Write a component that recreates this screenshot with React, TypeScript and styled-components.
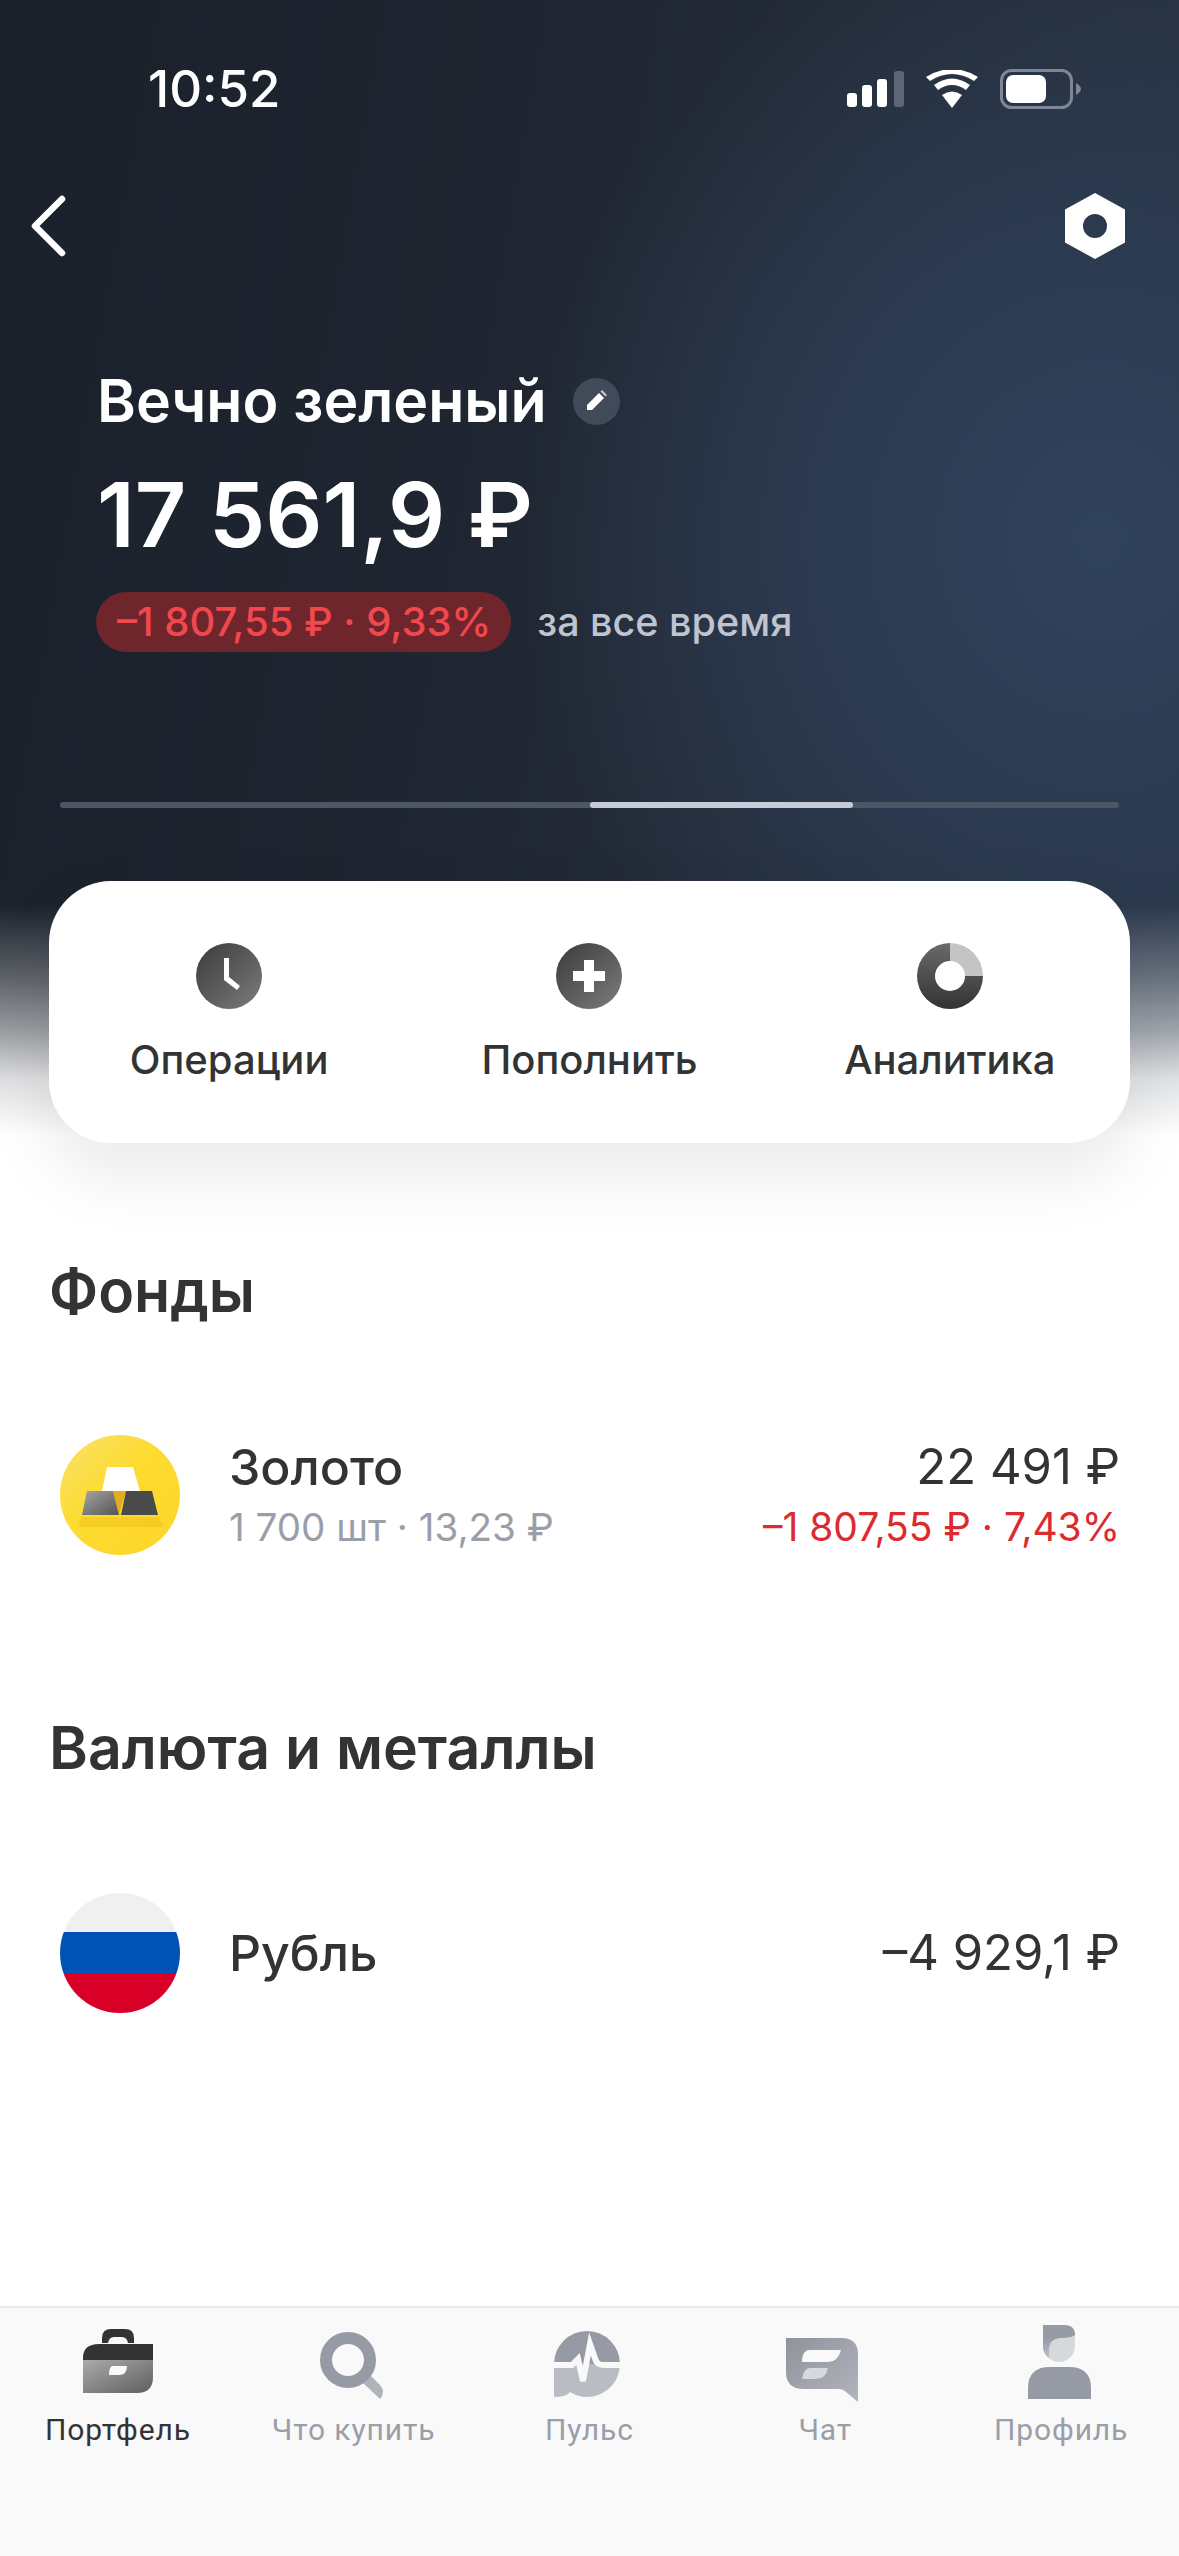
import React from 'react';
import styled, {createGlobalStyle} from "styled-components";

const GlobalStyle = createGlobalStyle`
  html, body {
    margin: 0;
    padding: 0;
    background: #fff;
  }
  * {
    box-sizing: border-box;
  }
`

const Page = styled.div`
  width: 1179px;
  height: 2556px;
  display: flex;
  flex-direction: column;
  overflow: hidden;
  background: #fff;
  font-family: Inter, "Noto Sans", sans-serif;
  color: #333333;
`
const Hero = styled.header`
  height: 1180px;
  padding-top: 64px;
  flex-shrink: 0;
  background:
    linear-gradient(to bottom, rgba(255,255,255,0) 905px, rgba(255,255,255,.3) 980px, rgba(255,255,255,.55) 1030px, rgba(255,255,255,.86) 1080px, #fff 1135px),
    radial-gradient(ellipse 580px 640px at 1100px 540px, #31425c 0%, #2c3a50 50%, rgba(38,48,64,0) 100%),
    linear-gradient(100deg, #1b212b 0%, #1e2530 35%, #2a3442 100%);
`
const StatusBar = styled.div`
  height: 50px;
  display: flex;
  align-items: center;
  justify-content: space-between;
  padding: 0 98px 0 148px;
`
const Time = styled.span`
  font-size: 51px;
  font-weight: 500;
  line-height: 50px;
  color: #fff;
`
const StatusIcons = styled.div`
  display: flex;
  align-items: center;
  gap: 22px;
`
const Nav = styled.div`
  margin-top: 78px;
  height: 68px;
  padding: 0 54px 0 28px;
  display: flex;
  align-items: center;
  justify-content: space-between;
`
const Summary = styled.div`
  margin-top: 106px;
  padding-left: 97px;
`
const TitleRow = styled.div`
  display: flex;
  align-items: center;
  gap: 26px;
`
const Title = styled.h1`
  margin: 0;
  font-size: 59px;
  font-weight: 600;
  line-height: 70px;
  color: #fff;
`
const EditBadge = styled.span`
  width: 47px;
  height: 47px;
  border-radius: 50%;
  background: #414a58;
  display: flex;
  align-items: center;
  justify-content: center;
`
const Amount = styled.div`
  margin-top: 26px;
  font-size: 89.500px;
  font-weight: 600;
  line-height: 106px;
  color: #fff;
`
const ProfitRow = styled.div`
  margin-top: 24px;
  display: flex;
  align-items: center;
  gap: 26px;
`
const ProfitPill = styled.span`
  height: 60px;
  padding: 0 20px 0 21px;
  margin-left: -1px;
  border-radius: 30px;
  background: #6f252c;
  color: #f2474c;
  font-size: 40px;
  font-weight: 500;
  line-height: 60px;
  white-space: nowrap;
`
const ProfitHint = styled.span`
  font-size: 39.500px;
  font-weight: 500;
  color: #bfc4cf;
`
const Progress = styled.div`
  margin: 150px 60px 0;
  height: 6px;
  border-radius: 3px;
  background: #4c5665;
  display: flex;
`
const ProgressThumb = styled.div`
  margin-left: 530px;
  width: 263px;
  height: 6px;
  border-radius: 3px;
  background: #c6cbd8;
`
const ActionCard = styled.div`
  margin: 73px 49px 0;
  height: 262px;
  padding-top: 62px;
  border-radius: 62px;
  background: #fff;
  box-shadow: 0 30px 70px rgba(0, 0, 0, .09);
  display: grid;
  grid-template-columns: repeat(3, 1fr);
  justify-items: center;
`
const Action = styled.div`
  width: 360px;
  display: flex;
  flex-direction: column;
  align-items: center;
  gap: 28px;
`
const ActionLabel = styled.span`
  font-size: 40px;
  font-weight: 500;
  line-height: 46px;
  color: #333333;
`
const Content = styled.main`
  flex: 1;
  padding: 0 59px 0 49px;
`
const SectionTitle = styled.h2<{$top: number}>`
  margin: ${props => props.$top}px 0 0;
  font-size: 59px;
  font-weight: 600;
  line-height: 68px;
  color: #333333;
`
const AssetRow = styled.div<{$top: number}>`
  margin-top: ${props => props.$top}px;
  padding-left: 11px;
  height: 120px;
  display: flex;
  align-items: center;
  justify-content: space-between;
`
const AssetMain = styled.div`
  display: flex;
  align-items: center;
  gap: 49px;
`
const AssetText = styled.div`
  padding-bottom: 3px;
`
const AssetName = styled.div`
  font-size: 50px;
  font-weight: 500;
  line-height: 60px;
  color: #333333;
`
const AssetSub = styled.div`
  margin-top: 6px;
  font-size: 38.600px;
  line-height: 48px;
  color: #9a9ea8;
`
const AssetValues = styled.div`
  padding-bottom: 3px;
  text-align: right;
`
const AssetValue = styled.div`
  font-size: 49px;
  line-height: 60px;
  color: #333333;
`
const AssetDelta = styled.div`
  margin-top: 6px;
  font-size: 39px;
  line-height: 48px;
  color: #dd2a2f;
`
const TabBar = styled.nav`
  height: 250px;
  flex-shrink: 0;
  border-top: 2px solid #e6e7e9;
  background: #f9f9fa;
  padding-top: 17px;
  display: grid;
  grid-template-columns: repeat(5, 1fr);
  align-items: start;
`
const Tab = styled.div`
  display: flex;
  flex-direction: column;
  align-items: center;
  gap: 7px;
`
const TabLabel = styled.span<{$active?: boolean}>`
  font-family: Roboto, Inter, sans-serif;
  font-size: 30px;
  line-height: 36px;
  letter-spacing: .9px;
  color: ${props => props.$active ? '#333333' : '#9a9ea8'};
`

const SignalIcon = () => (
    <svg width="57" height="36" viewBox="0 0 57 36">
        <rect x="0" y="22" width="10" height="14" rx="3" fill="#fff"/>
        <rect x="15" y="14" width="10" height="22" rx="3" fill="#fff"/>
        <rect x="30" y="8" width="10" height="28" rx="3" fill="#fff"/>
        <rect x="47" y="0" width="10" height="36" rx="3" fill="#5c6675"/>
    </svg>
)

const WifiIcon = () => (
    <svg width="52" height="38" viewBox="0 0 52 38">
        <path d="M26 38 L16 25 Q26 18 36 25 Z" fill="#fff"/>
        <path d="M12 20 L8 15 Q26 2 44 15 L40 20 Q26 10 12 20 Z" fill="#fff"/>
        <path d="M4 11 L0 7 Q26 -9 52 7 L48 11 Q26 -3 4 11 Z" fill="#fff"/>
    </svg>
)

const BatteryIcon = () => (
    <svg width="81" height="40" viewBox="0 0 81 40">
        <rect x="1.500" y="1.500" width="70" height="37" rx="10" fill="none" stroke="#7d8796" strokeWidth="3"/>
        <rect x="6" y="6" width="40" height="28" rx="7" fill="#fff"/>
        <path d="M76 14 Q81 17 81 20 Q81 23 76 26 Z" fill="#7d8796"/>
    </svg>
)

const BackIcon = () => (
    <svg width="40" height="64" viewBox="0 0 40 64">
        <path d="M34 5 L7 32 L34 59" fill="none" stroke="#fff" strokeWidth="6.500" strokeLinecap="round" strokeLinejoin="round"/>
    </svg>
)

const SettingsIcon = () => (
    <svg width="60" height="66" viewBox="0 0 60 66">
        <path fillRule="evenodd" d="M30 0 L60 16.500 V49.500 L30 66 L0 49.500 V16.500 Z M30 21 A12 12 0 1 0 30 45 A12 12 0 1 0 30 21 Z" fill="#fff"/>
    </svg>
)

const PencilIcon = () => (
    <svg width="24" height="24" viewBox="0 0 24 24">
        <path d="M3 16 L15 4 L20 9 L8 21 L3 21 Z" fill="#fff"/>
        <path d="M16.500 2.500 L18 1 L23 6 L21.500 7.500 Z" fill="#c9ccd2"/>
    </svg>
)

const ActionGradient = ({id}: {id: string}) => (
    <defs>
        <linearGradient id={id} x1="0" y1="0" x2="1" y2="1">
            <stop offset="0" stopColor="#3a3a3a"/>
            <stop offset="1" stopColor="#7c7c7c"/>
        </linearGradient>
    </defs>
)

const ClockIcon = () => (
    <svg width="66" height="66" viewBox="0 0 66 66">
        <ActionGradient id="clock"/>
        <circle cx="33" cy="33" r="33" fill="url(#clock)"/>
        <path d="M28 15 H33 V34 L44 43 L41 47 L28 37 Z" fill="#fff"/>
    </svg>
)

const PlusIcon = () => (
    <svg width="66" height="66" viewBox="0 0 66 66">
        <ActionGradient id="plus"/>
        <circle cx="33" cy="33" r="33" fill="url(#plus)"/>
        <path d="M28 17 H38 V28 H49 V38 H38 V49 H28 V38 H17 V28 H28 Z" fill="#fff"/>
    </svg>
)

const ChartIcon = () => (
    <svg width="66" height="66" viewBox="0 0 66 66">
        <defs>
            <linearGradient id="chart" x1="0" y1="0" x2="0" y2="1">
                <stop offset="0" stopColor="#6a6a6a"/>
                <stop offset="1" stopColor="#333"/>
            </linearGradient>
        </defs>
        <path fillRule="evenodd" d="M33 0 A33 33 0 1 0 66 33 H48 A15 15 0 1 1 33 18 Z" fill="url(#chart)"/>
        <path d="M33 0 A33 33 0 0 1 66 33 H48 A15 15 0 0 0 33 18 Z" fill="#c4c4c4"/>
    </svg>
)

const GoldIcon = () => (
    <svg width="120" height="120" viewBox="0 0 120 120">
        <defs>
            <linearGradient id="goldBg" x1="0" y1="0" x2="1" y2="1">
                <stop offset="0" stopColor="#fbe26a"/>
                <stop offset=".45" stopColor="#fddb2f"/>
                <stop offset="1" stopColor="#fdd52a"/>
            </linearGradient>
            <linearGradient id="goldLeft" x1="0" y1="0" x2="1" y2="1">
                <stop offset="0" stopColor="#a4a4a4"/>
                <stop offset="1" stopColor="#555"/>
            </linearGradient>
        </defs>
        <circle cx="60" cy="60" r="60" fill="url(#goldBg)"/>
        <path d="M22 82 H98 L104 92 H18 Z" fill="#f0c41c" opacity=".6"/>
        <path d="M47 32 H73 L80 56 H42 Z" fill="#fff"/>
        <path d="M53 56 H66 L59 80 Z" fill="#e3ae1e"/>
        <path d="M27 56 H53 L59 80 H22 Z" fill="url(#goldLeft)"/>
        <path d="M66 56 H92 L98 80 H61 Z" fill="#4a4a4a"/>
    </svg>
)

const FlagIcon = () => (
    <svg width="120" height="120" viewBox="0 0 120 120">
        <defs>
            <clipPath id="flagClip">
                <circle cx="60" cy="60" r="60"/>
            </clipPath>
        </defs>
        <g clipPath="url(#flagClip)">
            <rect x="0" y="0" width="120" height="39" fill="#f0f0f0"/>
            <rect x="0" y="39" width="120" height="42" fill="#0052b4"/>
            <rect x="0" y="81" width="120" height="39" fill="#d80027"/>
        </g>
    </svg>
)

const BriefcaseIcon = () => (
    <svg width="80" height="80" viewBox="0 0 80 80">
        <defs>
            <linearGradient id="case" x1="0" y1="0" x2="1" y2="1">
                <stop offset="0" stopColor="#ababab"/>
                <stop offset="1" stopColor="#5e5e5e"/>
            </linearGradient>
        </defs>
        <g transform="translate(5 4)">
            <path d="M19 14 V9 Q19 0 28 0 H42 Q51 0 51 9 V14 H45 Q44 8 39 8 H31 Q26 8 25 14 Z" fill="#333"/>
            <path d="M0 31 V29 Q0 15 16 15 H70 V31 Z" fill="#333"/>
            <path d="M0 31 H70 V48 Q70 64 54 64 H0 Z" fill="url(#case)"/>
            <path d="M30 37 H44 Q44 46 36 46 H26 Q26 37 30 37 Z" fill="#f9f9fa"/>
        </g>
    </svg>
)

const SearchIcon = () => (
    <svg width="80" height="80" viewBox="0 0 80 80">
        <g transform="translate(6 7)">
            <path d="M42 50 L50 43 L60 53 Q66 60 60 67 Z" fill="#b0b3ba"/>
            <circle cx="28" cy="28" r="22" fill="none" stroke="#969aa4" strokeWidth="12"/>
        </g>
    </svg>
)

const PulseIcon = () => (
    <svg width="80" height="80" viewBox="0 0 80 80">
        <g transform="translate(5 6)">
            <path d="M0 33 A33 33 0 0 1 66 33 Z" fill="#969aa4"/>
            <path d="M0 33 H66 A33 33 0 0 1 33 66 Q24 66 16 61 Q13 66 0 66 Z" fill="#b9bcc3"/>
            <path d="M0 34 H18 L24 28 L29 50 L36 13 L42 30 Q44 34 50 34 H66" fill="none" stroke="#f9f9fa" strokeWidth="6"/>
        </g>
    </svg>
)

const ChatIcon = () => (
    <svg width="80" height="80" viewBox="0 0 80 80">
        <defs>
            <linearGradient id="chat" x1="0" y1="0" x2="1" y2="1">
                <stop offset="0" stopColor="#8f939d"/>
                <stop offset="1" stopColor="#b2b5bc"/>
            </linearGradient>
        </defs>
        <g transform="translate(1 13)">
            <path d="M0 0 H55 Q72 0 72 16 V64 L60 54 Q57 51 52 51 H18 Q0 51 0 34 Z" fill="url(#chat)"/>
            <path d="M24 12 H55 Q52 24 42 24 H16 Q16 12 24 12 Z" fill="#f9f9fa"/>
            <path d="M24 30 H42 Q40 41 30 41 H16 Q18 30 24 30 Z" fill="#d6d9de"/>
        </g>
    </svg>
)

const ProfileIcon = () => (
    <svg width="80" height="80" viewBox="0 0 80 80">
        <defs>
            <linearGradient id="hair" x1="0" y1="0" x2="0" y2="1">
                <stop offset=".4" stopColor="#969aa4"/>
                <stop offset="1" stopColor="#bcbfc5"/>
            </linearGradient>
        </defs>
        <g transform="translate(7 0)">
            <path d="M15 0 H36 Q47 0 47 10 V21 A16 16 0 0 1 15 21 Z" fill="#d6d9dc"/>
            <path d="M15 0 H36 Q47 0 47 10 Q44 13 32 13 Q21 14 21 25 V33 Q15 29 15 21 Z" fill="url(#hair)"/>
            <path d="M0 74 V63 Q0 42 22 42 H41 Q63 42 63 63 V74 Z" fill="#969aa4"/>
        </g>
    </svg>
)

export default function App() {
    const actions = [
        {label: 'Операции', icon: <ClockIcon/>},
        {label: 'Пополнить', icon: <PlusIcon/>},
        {label: 'Аналитика', icon: <ChartIcon/>},
    ]
    const tabs = [
        {label: 'Портфель', icon: <BriefcaseIcon/>, active: true},
        {label: 'Что купить', icon: <SearchIcon/>},
        {label: 'Пульс', icon: <PulseIcon/>},
        {label: 'Чат', icon: <ChatIcon/>},
        {label: 'Профиль', icon: <ProfileIcon/>},
    ]
    return (
        <Page>
            <GlobalStyle/>
            <Hero>
                <StatusBar>
                    <Time>10:52</Time>
                    <StatusIcons>
                        <SignalIcon/>
                        <WifiIcon/>
                        <BatteryIcon/>
                    </StatusIcons>
                </StatusBar>
                <Nav>
                    <BackIcon/>
                    <SettingsIcon/>
                </Nav>
                <Summary>
                    <TitleRow>
                        <Title>Вечно зеленый</Title>
                        <EditBadge><PencilIcon/></EditBadge>
                    </TitleRow>
                    <Amount>17 561,9 ₽</Amount>
                    <ProfitRow>
                        <ProfitPill>–1 807,55 ₽ · 9,33%</ProfitPill>
                        <ProfitHint>за все время</ProfitHint>
                    </ProfitRow>
                </Summary>
                <Progress>
                    <ProgressThumb/>
                </Progress>
                <ActionCard>
                    {actions.map((item, index) => <Action key={index}>
                        {item.icon}
                        <ActionLabel>{item.label}</ActionLabel>
                    </Action>)}
                </ActionCard>
            </Hero>
            <Content>
                <SectionTitle $top={77}>Фонды</SectionTitle>
                <AssetRow $top={110}>
                    <AssetMain>
                        <GoldIcon/>
                        <AssetText>
                            <AssetName>Золото</AssetName>
                            <AssetSub>1 700 шт · 13,23 ₽</AssetSub>
                        </AssetText>
                    </AssetMain>
                    <AssetValues>
                        <AssetValue>22 491 ₽</AssetValue>
                        <AssetDelta>–1 807,55 ₽ · 7,43%</AssetDelta>
                    </AssetValues>
                </AssetRow>
                <SectionTitle $top={159}>Валюта и металлы</SectionTitle>
                <AssetRow $top={111}>
                    <AssetMain>
                        <FlagIcon/>
                        <AssetName>Рубль</AssetName>
                    </AssetMain>
                    <AssetValue>–4 929,1 ₽</AssetValue>
                </AssetRow>
            </Content>
            <TabBar>
                {tabs.map((item, index) => <Tab key={index}>
                    {item.icon}
                    <TabLabel $active={item.active}>{item.label}</TabLabel>
                </Tab>)}
            </TabBar>
        </Page>
    );
}
